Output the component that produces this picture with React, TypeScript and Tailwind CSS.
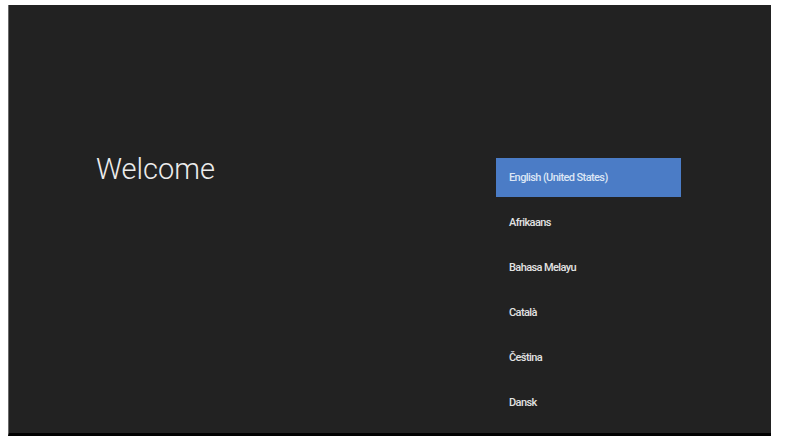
const languages = ['English (United States)', 'Afrikaans', 'Bahasa Melayu', 'Català', 'Čeština', 'Dansk']

export default function App() {
  return (
    <div className="w-[801px] h-[448px] bg-white pl-[8px] pt-[5px] font-['Roboto',sans-serif]">
      <div className="w-[763px] h-[431px] bg-[#222222] border-l border-l-[#6a6a6a] border-b-[3px] border-b-black flex">
        <div className="w-[487px] pl-[87px] pt-[144px]">
          <h1 className="text-[29px] leading-[40px] font-light text-[#ececec]">Welcome</h1>
        </div>
        <div className="w-[185px] pt-[153px] flex flex-col gap-[6px]">
          {languages.map((lang, i) => (
            <div
              key={lang}
              className={`h-[39px] flex items-center pl-[13px] pt-[2px] text-[11px] font-medium tracking-[-0.6px] ${
                i === 0 ? 'bg-[#4b7cc6] text-[#dce6f5]' : 'text-[#e2e2e2]'
              }`}
            >
              {lang}
            </div>
          ))}
        </div>
      </div>
    </div>
  )
}
